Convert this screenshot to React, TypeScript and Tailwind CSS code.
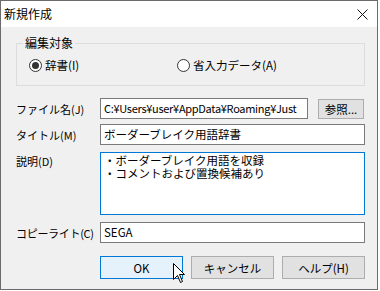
import React from "react";

const font = { fontFamily: '"Noto Sans CJK JP", "Noto Sans", sans-serif' };

function Radio({ checked, label }: { checked?: boolean; label: string }) {
  return (
    <div className="flex items-center gap-[3px]">
      <span className="flex h-[13px] w-[13px] items-center justify-center rounded-full border border-[#333333] bg-white">
        {checked && <span className="h-[7px] w-[7px] rounded-full bg-[#333333]" />}
      </span>
      <span className="whitespace-nowrap text-[11.5px] leading-[16px]">{label}</span>
    </div>
  );
}

export default function App() {
  return (
    <div className="relative h-[291px] w-[380px] bg-white text-black" style={font}>
      <div className="flex h-[290px] w-[378px] flex-col border border-[#6b6b6b] bg-[#f0f0f0]">
        {/* Title bar */}
        <div className="flex h-[26px] shrink-0 items-center justify-between bg-white pl-[3px] pr-[8px]">
          <span className="text-[12px] leading-[16px]">新規作成</span>
          <svg width="11" height="11" viewBox="0 0 11 11" className="mr-[1px]">
            <path d="M0.5 0.5 L10.5 10.5 M10.5 0.5 L0.5 10.5" stroke="#111" strokeWidth="1" fill="none" />
          </svg>
        </div>

        {/* Body */}
        <div className="flex flex-col pl-[15px] pr-[12px] pt-[8px]">
          <fieldset className="w-[349px] border border-[#dcdcdc] pb-[12px] pt-[6px]">
            <legend className="ml-[6px] px-[2px] text-[12px] leading-[16px]">編集対象</legend>
            <div className="flex items-center pl-[12px]">
              <div className="w-[148px]">
                <Radio checked label="辞書(I)" />
              </div>
              <Radio label="省入力データ(A)" />
            </div>
          </fieldset>

          <div className="mt-[12px] grid grid-cols-[84px_265px] gap-y-[5px] text-[11.5px]">
            {/* File name */}
            <div className="flex items-center whitespace-nowrap text-[11px] leading-[16px]">ファイル名(J)</div>
            <div className="flex items-center">
              <div className="h-[21px] w-[208px] overflow-hidden whitespace-nowrap border border-[#7a7a7a] bg-white pl-[3px] text-[11px] leading-[19px] tracking-[-0.3px]">
                C:¥Users¥user¥AppData¥Roaming¥Just
              </div>
              <div className="ml-[10px] flex h-[20px] w-[46px] items-center justify-center whitespace-nowrap border border-[#adadad] bg-[#e1e1e1] leading-[16px]">
                参照...
              </div>
            </div>

            {/* Title */}
            <div className="flex items-center whitespace-nowrap text-[11px] leading-[16px]">タイトル(M)</div>
            <div className="h-[21px] overflow-hidden whitespace-nowrap border border-[#7a7a7a] bg-white pl-[3px] leading-[19px]">
              ボーダーブレイク用語辞書
            </div>

            {/* Description */}
            <div className="mt-[2px] whitespace-nowrap pt-[1px] text-[11px] leading-[16px]">説明(D)</div>
            <div className="mt-[2px] h-[63px] border border-[#0078d7] bg-white pl-[3px] pt-[1px] leading-[13px]">
              <div className="whitespace-nowrap">・ボーダーブレイク用語を収録</div>
              <div className="whitespace-nowrap">・コメントおよび置換候補あり</div>
            </div>

            {/* Copyright */}
            <div className="mt-[2px] flex items-center whitespace-nowrap text-[11px] leading-[16px] tracking-[-0.3px]">コピーライト(C)</div>
            <div className="mt-[2px] h-[21px] overflow-hidden whitespace-nowrap border border-[#7a7a7a] bg-white pl-[3px] leading-[19px]">
              SEGA
            </div>
          </div>

          {/* Buttons */}
          <div className="mt-[13px] flex gap-[8px] pl-[84px] text-[11.5px] leading-[16px]">
            <div className="flex h-[23px] w-[83px] items-center justify-center border border-[#0078d7] bg-[#e5f1fb]">OK</div>
            <div className="flex h-[23px] w-[83px] items-center justify-center border border-[#adadad] bg-[#e1e1e1]">キャンセル</div>
            <div className="flex h-[23px] w-[83px] items-center justify-center border border-[#adadad] bg-[#e1e1e1]">ヘルプ(H)</div>
          </div>
        </div>
      </div>

      {/* Mouse cursor */}
      <svg className="absolute left-[173px] top-[263px]" width="13" height="21" viewBox="0 0 13 21">
        <path
          d="M0.5 0.5 L0.5 16.5 L4.5 12.5 L7.5 19.5 L9.5 18.5 L6.5 11.5 L11.5 11.5 Z"
          fill="#ffffff"
          stroke="#000000"
          strokeWidth="1"
          strokeLinejoin="miter"
        />
      </svg>
    </div>
  );
}
